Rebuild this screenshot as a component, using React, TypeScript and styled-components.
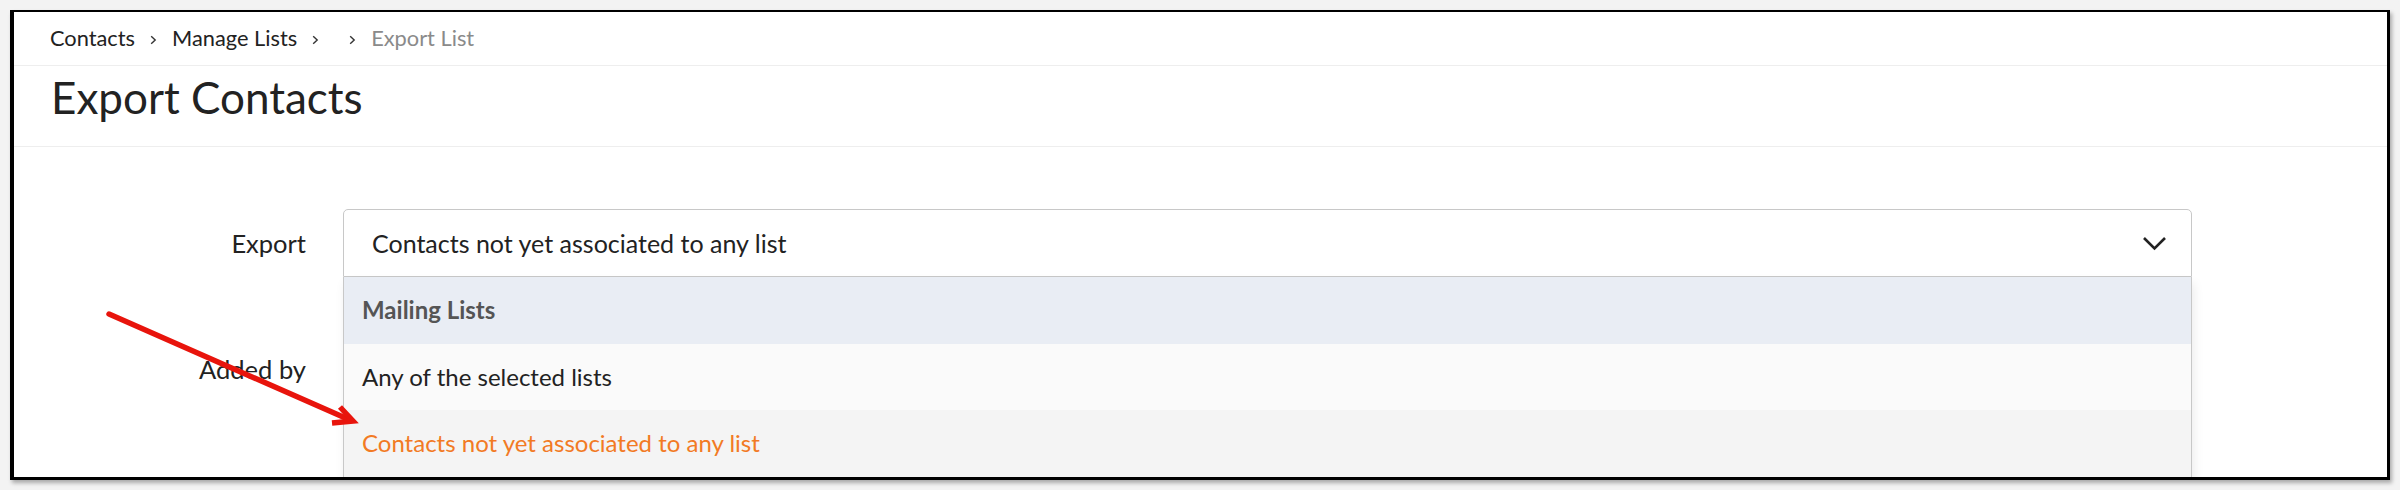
import React from "react";
import styled, { createGlobalStyle } from "styled-components";

const Global = createGlobalStyle`
  html, body { margin: 0; padding: 0; }
  body {
    background: #f3f3f3;
    font-family: Lato, "Liberation Sans", sans-serif;
    color: #222;
  }
`;

const Screen = styled.div`
  box-sizing: border-box;
  height: 490px;
  padding: 10px 0 0 10px;
`;

const Frame = styled.div`
  position: relative;
  box-sizing: border-box;
  width: 2380px;
  height: 470px;
  background: #fff;
  border-style: solid;
  border-color: #000;
  border-width: 2px 3px 3px 4px;
  box-shadow: 2px 3px 4px rgba(0, 0, 0, 0.3);
  overflow: hidden;
`;

const Breadcrumb = styled.nav`
  box-sizing: border-box;
  display: flex;
  align-items: flex-start;
  gap: 15px;
  height: 54px;
  padding: 13px 0 0 36px;
  border-bottom: 1px solid #eeeeee;
  font-size: 21.8px;
  line-height: 1.2;
`;

const Crumb = styled.span<{ $current?: boolean }>`
  color: ${(p) => (p.$current ? "#8a8a8a" : "#222")};
`;

const Sep = styled.svg`
  width: 7px;
  height: 10px;
  margin-top: 10px;
  flex: none;
`;

const TitleBar = styled.div`
  box-sizing: border-box;
  height: 81px;
  padding: 5px 0 0 37px;
  border-bottom: 1px solid #eeeeee;
`;

const Title = styled.h1`
  margin: 0;
  font-size: 44px;
  font-weight: 400;
  line-height: 1.2;
  color: #222;
`;

const Form = styled.div`
  display: grid;
  grid-template-columns: 292px 1849px;
  column-gap: 37px;
  row-gap: 58px;
  padding-top: 62px;
`;

const Label = styled.div`
  align-self: center;
  text-align: right;
  font-size: 25.5px;
  line-height: 1.2;
  color: #222;
`;

const Field = styled.div`
  position: relative;
`;

const SelectBox = styled.div<{ $open?: boolean }>`
  box-sizing: border-box;
  display: flex;
  align-items: center;
  justify-content: space-between;
  height: 68px;
  padding: 0 24px 0 28px;
  border: 1px solid #c8c8c8;
  border-radius: ${(p) => (p.$open ? "5px 5px 0 0" : "5px")};
  background: #fff;
  font-size: 25px;
  line-height: 1.2;
  color: #222;
`;

const Chevron = styled.svg`
  width: 25px;
  height: 15px;
  flex: none;
`;

const Menu = styled.ul`
  position: absolute;
  top: 100%;
  left: 0;
  right: 0;
  margin: 0;
  padding: 0;
  list-style: none;
  border-left: 1px solid #c8c8c8;
  border-right: 1px solid #c8c8c8;
  box-shadow: 2px 6px 10px rgba(0, 0, 0, 0.08);
  z-index: 2;
`;

const MenuItem = styled.li<{ $kind: "group" | "plain" | "active"; $h: number }>`
  box-sizing: border-box;
  display: flex;
  align-items: center;
  height: ${(p) => p.$h}px;
  padding-left: 18px;
  font-size: 24px;
  line-height: 1.2;
  font-weight: ${(p) => (p.$kind === "group" ? 700 : 400)};
  background: ${(p) =>
    p.$kind === "group" ? "#e9edf4" : p.$kind === "active" ? "#f4f4f4" : "#fafafa"};
  color: ${(p) =>
    p.$kind === "group" ? "#555" : p.$kind === "active" ? "#f27a24" : "#222"};
`;

const Overlay = styled.svg`
  position: absolute;
  left: 0;
  top: 0;
  width: 500px;
  height: 470px;
  pointer-events: none;
  z-index: 5;
`;

const SepIcon = () => (
  <Sep viewBox="0 0 7 10">
    <path d="M1.2 1.2 L5.2 5 L1.2 8.8" fill="none" stroke="#333" strokeWidth="1.4" />
  </Sep>
);

export default function App() {
  return (
    <>
      <Global />
      <Screen>
        <Frame>
          <Breadcrumb>
            <Crumb>Contacts</Crumb>
            <SepIcon />
            <Crumb>Manage Lists</Crumb>
            <SepIcon />
            <Crumb />
            <SepIcon />
            <Crumb $current>Export List</Crumb>
          </Breadcrumb>
          <TitleBar>
            <Title>Export Contacts</Title>
          </TitleBar>
          <Form>
            <Label>Export</Label>
            <Field>
              <SelectBox $open>
                <span>Contacts not yet associated to any list</span>
                <Chevron viewBox="0 0 25 15">
                  <path d="M2 2 L12.5 12.5 L23 2" fill="none" stroke="#222" strokeWidth="2.6" />
                </Chevron>
              </SelectBox>
              <Menu>
                <MenuItem $kind="group" $h={67}>Mailing Lists</MenuItem>
                <MenuItem $kind="plain" $h={66}>Any of the selected lists</MenuItem>
                <MenuItem $kind="active" $h={67}>Contacts not yet associated to any list</MenuItem>
              </Menu>
            </Field>
            <Label>Added by</Label>
            <Field>
              <SelectBox />
            </Field>
          </Form>
          <Overlay viewBox="0 0 500 470">
            <g stroke="#e8140c" strokeWidth="5.5" fill="none" strokeLinecap="round">
              <path d="M95 302 L336 408" />
              <path d="M318 411 L339 409 L326 395" strokeLinejoin="miter" strokeLinecap="butt" />
            </g>
          </Overlay>
        </Frame>
      </Screen>
    </>
  );
}
